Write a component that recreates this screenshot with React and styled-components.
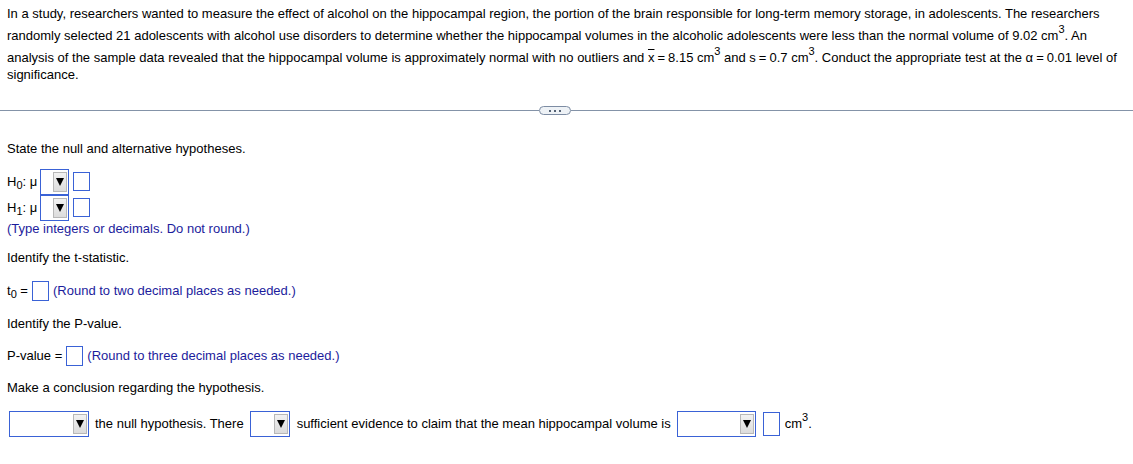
import React from "react";
import styled, { createGlobalStyle } from "styled-components";

const Global = createGlobalStyle`
  body {
    margin: 0;
    background: #ffffff;
    font-family: "Liberation Sans", Arial, sans-serif;
    font-size: 13px;
    color: #000;
  }
`;

const Page = styled.div`
  width: 1133px;
  height: 464px;
  overflow: hidden;
`;

const Problem = styled.div`
  padding: 4.5px 7px 0 7px;
`;

const ProblemLine = styled.div`
  line-height: 17px;
  padding-top: ${(p) => (p.$sup ? 5 : 0)}px;
  white-space: nowrap;
`;

const Sup = styled.sup`
  font-size: 11px;
  vertical-align: 7px;
  line-height: 0;
`;

const Bar = styled.span`
  text-decoration: overline;
`;

const Eq = styled.span`
  margin: 0 3px;
`;

const Divider = styled.div`
  margin-top: 23px;
  display: flex;
  align-items: center;
  height: 10px;

  &::before,
  &::after {
    content: "";
    height: 1px;
    background: #8493a8;
  }
  &::before {
    flex: 0 0 539px;
  }
  &::after {
    flex: 1;
  }
`;

const Pill = styled.span`
  width: 30px;
  height: 7px;
  border: 1px solid #7d8ca3;
  border-radius: 5px;
  background: #eef2f6;
  display: flex;
  align-items: center;
  justify-content: center;
  gap: 3px;

  i {
    width: 2px;
    height: 2px;
    background: #556275;
    display: block;
  }
`;

const Body = styled.div`
  padding: 0 7px;
  display: flex;
  flex-direction: column;
`;

const Line = styled.div`
  display: flex;
  align-items: center;
  margin-top: ${(p) => p.$mt || 0}px;
  height: ${(p) => p.$h || 17}px;
  white-space: nowrap;
`;

const Hint = styled.span`
  color: #1c1c9c;
  margin-left: ${(p) => p.$ml || 0}px;
`;

const Sub = styled.sub`
  font-size: 11px;
  vertical-align: -3px;
  line-height: 0;
`;

const Select = styled.span`
  display: inline-flex;
  justify-content: flex-end;
  align-items: center;
  box-sizing: border-box;
  width: ${(p) => p.$w}px;
  height: ${(p) => p.$h || 26}px;
  border: 1px solid #3a62d6;
  padding: 2px 1px 2px 0;
  margin: 0 ${(p) => p.$mr || 0}px 0 ${(p) => p.$ml || 0}px;
  background: #fff;
`;

const Arrow = styled.span`
  width: 14px;
  height: 100%;
  box-sizing: border-box;
  background: linear-gradient(#f2f2f2, #dcdcdc);
  border: 1px solid #b8b8b8;
  display: flex;
  align-items: center;
  justify-content: center;

  &::after {
    content: "";
    border-left: 4px solid transparent;
    border-right: 4px solid transparent;
    border-top: 8px solid #000;
  }
`;

const Box = styled.span`
  display: inline-block;
  box-sizing: border-box;
  width: 17px;
  height: ${(p) => p.$h || 20}px;
  border: 1px solid #3a62d6;
  margin: 0 ${(p) => p.$mr || 0}px 0 ${(p) => p.$ml || 0}px;
  background: #fff;
`;

const Label = styled.span`
  display: inline-block;
  width: ${(p) => (p.$w ? `${p.$w}px` : "auto")};
`;

const Dropdown = (props) => (
  <Select {...props}>
    <Arrow />
  </Select>
);

const App = () => {
  return (
    <Page>
      <Global />
      <Problem>
        <ProblemLine>
          In a study, researchers wanted to measure the effect of alcohol on the
          hippocampal region, the portion of the brain responsible for
          long-term memory storage, in adolescents. The researchers
        </ProblemLine>
        <ProblemLine $sup>
          randomly selected 21 adolescents with alcohol use disorders to
          determine whether the hippocampal volumes in the alcoholic adolescents
          were less than the normal volume of 9.02 cm<Sup>3</Sup>. An
        </ProblemLine>
        <ProblemLine $sup>
          analysis of the sample data revealed that the hippocampal volume is
          approximately normal with no outliers and <Bar>x</Bar>
          <Eq>=</Eq>8.15 cm<Sup>3</Sup> and s<Eq>=</Eq>0.7 cm<Sup>3</Sup>.
          Conduct the appropriate test at the α<Eq>=</Eq>0.01 level of
        </ProblemLine>
        <ProblemLine>significance.</ProblemLine>
      </Problem>

      <Divider>
        <Pill>
          <i />
          <i />
          <i />
        </Pill>
      </Divider>

      <Body>
        <Line $mt={24}>State the null and alternative hypotheses.</Line>
        <Line $mt={12} $h={26}>
          <Label $w={33}>
            H<Sub>0</Sub>: μ
          </Label>
          <Dropdown $w={29} $h={26} $mr={4} />
          <Box $h={19} />
        </Line>
        <Line $h={26}>
          <Label $w={33}>
            H<Sub>1</Sub>: μ
          </Label>
          <Dropdown $w={29} $h={26} $mr={4} />
          <Box $h={19} />
        </Line>
        <Line $mt={-1}>
          <Hint>(Type integers or decimals. Do not round.)</Hint>
        </Line>
        <Line $mt={12}>Identify the t-statistic.</Line>
        <Line $mt={14} $h={22}>
          <Label>
            t<Sub>0</Sub>&nbsp;=
          </Label>
          <Box $ml={4} $mr={4} $h={20} />
          <Hint>(Round to two decimal places as needed.)</Hint>
        </Line>
        <Line $mt={13}>Identify the P-value.</Line>
        <Line $mt={13} $h={22}>
          <Label>P-value =</Label>
          <Box $ml={4} $mr={4} $h={20} />
          <Hint>(Round to three decimal places as needed.)</Hint>
        </Line>
        <Line $mt={12}>Make a conclusion regarding the hypothesis.</Line>
        <Line $mt={15} $h={26}>
          <Dropdown $w={80} $ml={2} $mr={6} />
          the null hypothesis. There
          <Dropdown $w={40} $ml={6} $mr={7} />
          sufficient evidence to claim that the mean hippocampal volume is
          <Dropdown $w={79} $ml={6} $mr={7} />
          <Box $h={24} $mr={5} />
          <Label>
            cm<Sup>3</Sup>.
          </Label>
        </Line>
      </Body>
    </Page>
  );
};

export default App;
